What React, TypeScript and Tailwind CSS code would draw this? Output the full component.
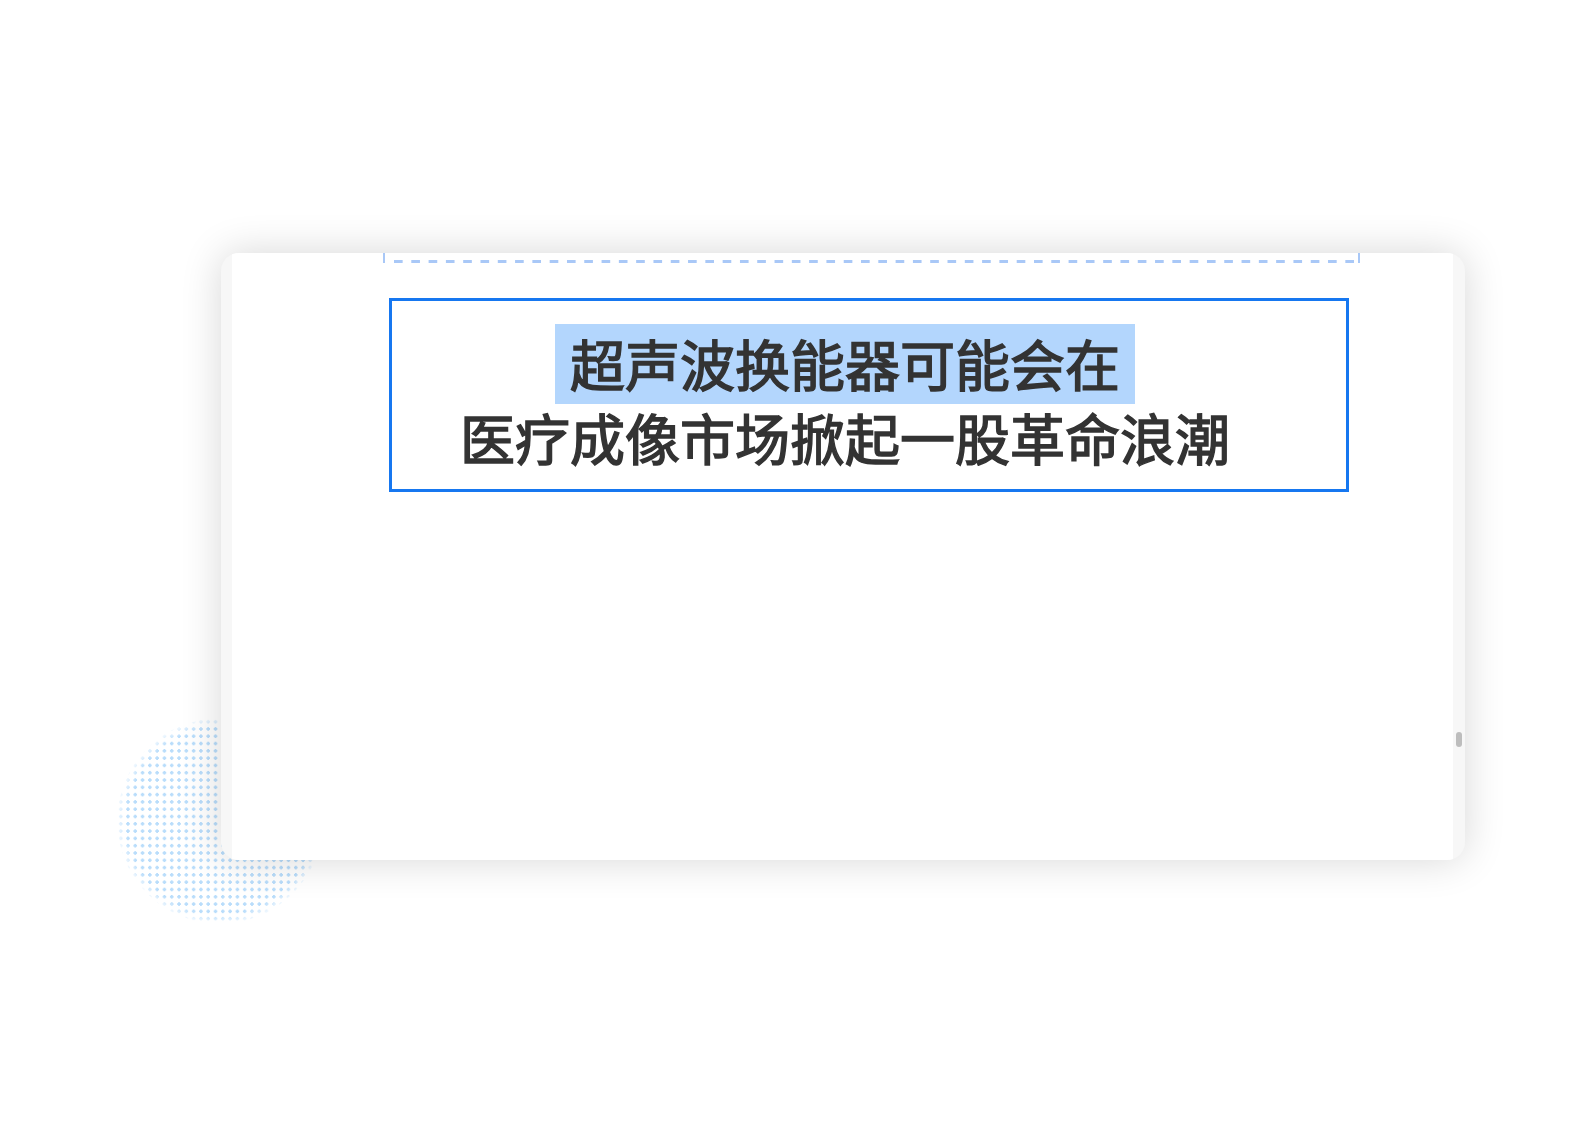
import React from 'react'

export default function App() {
  return (
    <div className="relative w-[1596px] h-[1122px] bg-white overflow-hidden pt-[253px] pl-[221px] font-['Noto_Sans_CJK_SC',sans-serif]">
      {/* dotted decoration behind the card */}
      <div className="absolute left-[117px] top-[718px] w-[206px] h-[206px] rounded-full bg-[radial-gradient(circle,#b9ddfb_1.6px,transparent_1.9px)] bg-[length:7.3px_7.3px] [mask-image:radial-gradient(circle,black_64%,transparent_72%)]"></div>

      <div className="relative flex w-[1244px] h-[607px] rounded-[18px] bg-[#f7f7f7] overflow-hidden shadow-[0_0_40px_rgba(0,0,0,0.16)]">
        <div className="w-[11px] shrink-0"></div>
        <div className="flex-1 bg-white">
          <div className="ml-[151px] w-[977px] h-[10px] border-x-2 border-[#a9c8f7] flex items-end">
            <div className="w-full h-[3px] ml-[9px] bg-[linear-gradient(to_right,#a9c8f7_50%,transparent_0)] bg-[length:17.3px_3px]"></div>
          </div>
          <div className="ml-[157px] mt-[35px] w-[960px] border-[3px] border-[#1677f0] pt-[23px] pb-[17px] pr-[48px] flex flex-col items-center text-[#333333] font-normal text-[55px] [-webkit-text-stroke:1.5px_#333333]">
            <div className="h-[80px] leading-[76px] px-[15px] bg-[#b3d6fd]">超声波换能器可能会在</div>
            <div className="h-[68px] leading-[64px]">医疗成像市场掀起一股革命浪潮</div>
          </div>
        </div>
        <div className="w-[12px] shrink-0 flex flex-col items-center pt-[479px]">
          <div className="w-[6px] h-[15px] rounded-full bg-[#bdbdbd]"></div>
        </div>
      </div>
    </div>
  )
}
